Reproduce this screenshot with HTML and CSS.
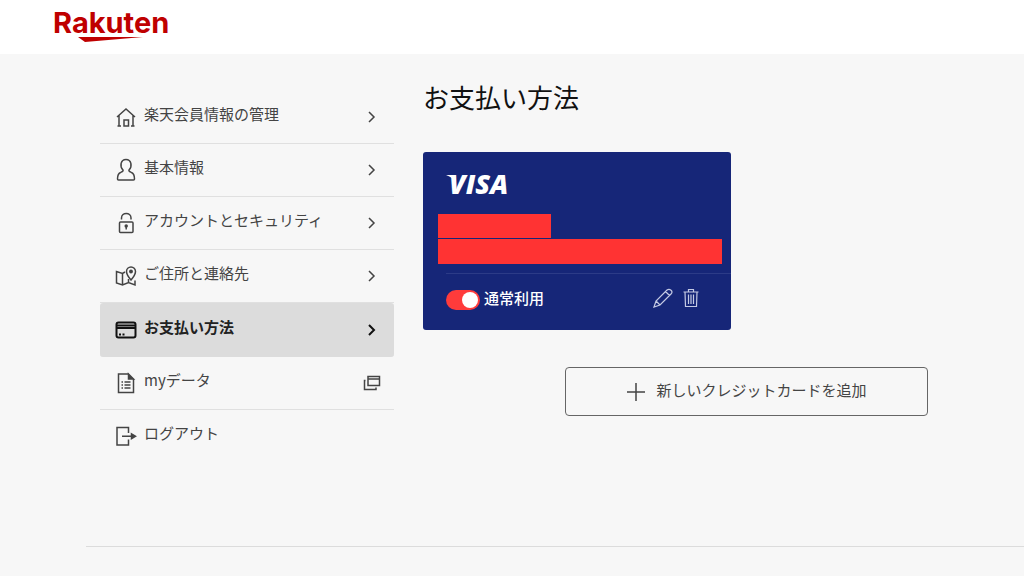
FILE: index.html
```
<!DOCTYPE html>
<html lang="ja">
    <head>
        <meta charset="utf-8">
        <title>お支払い方法</title>
        <link rel="stylesheet" href="styles.css">
    </head>
    <body>
        <header class="Header">
            <a class="Logo" href="#">
                <svg width="120" height="46" viewBox="0 0 120 46">
                    <text class="LogoText" x="-1" y="33">Rakuten</text>
                    <path d="M24 37H89L31 42Z" fill="#bf0000"/>
                </svg>
            </a>
        </header>

        <main class="Main">
            <nav class="Menu">
                <a class="MenuItem" href="#">
                    <svg class="Icon" viewBox="0 0 22 24">
                        <path d="M2 12L11 4L20 12M4 10.500V21M18 10.500V21M2.500 21H6M16 21H19.500M9 21V15H13.500V21Z"/>
                    </svg>
                    <span class="MenuText">楽天会員情報の管理</span>
                    <svg class="Arrow" viewBox="0 0 10 14"><path d="M2 2L7 7L2 12"/></svg>
                </a>
                <a class="MenuItem" href="#">
                    <svg class="Icon" viewBox="0 0 22 24">
                        <path d="M8 12C4.500 8.500 5.500 1.500 11 1.500S17.500 8.500 14 12C13.500 13.500 15 13.800 16.500 14.500C19 15.600 19.500 18 19.500 21Q19.500 22 18.500 22H3.500Q2.500 22 2.500 21C2.500 18 3 15.600 5.500 14.500C7 13.800 8.500 13.500 8 12Z"/>
                    </svg>
                    <span class="MenuText">基本情報</span>
                    <svg class="Arrow" viewBox="0 0 10 14"><path d="M2 2L7 7L2 12"/></svg>
                </a>
                <a class="MenuItem" href="#">
                    <svg class="Icon" viewBox="0 0 22 24">
                        <rect x="4.500" y="11" width="13.500" height="10.500" rx="1"/>
                        <path d="M6.500 8.500V7C6.500 1 16 1 16 7V8.500"/>
                        <path d="M11.200 15V18.500"/>
                        <circle cx="11.200" cy="15" r="1" fill="currentColor"/>
                    </svg>
                    <span class="MenuText">アカウントとセキュリティ</span>
                    <svg class="Arrow" viewBox="0 0 10 14"><path d="M2 2L7 7L2 12"/></svg>
                </a>
                <a class="MenuItem" href="#">
                    <svg class="Icon" viewBox="0 0 22 24">
                        <path d="M10 8L7.500 9.500L1.500 7.500V19L7.500 21L13.500 18.500L20 21V16.500M7.500 9.500V21M13.500 15V18.500"/>
                        <path d="M16 16C13 12.500 11.500 10.500 11.500 7.500A4.500 4.500 0 0 1 20.500 7.500C20.500 10.500 19 12.500 16 16Z"/>
                        <circle cx="16" cy="7.500" r="1.200" fill="currentColor"/>
                    </svg>
                    <span class="MenuText">ご住所と連絡先</span>
                    <svg class="Arrow" viewBox="0 0 10 14"><path d="M2 2L7 7L2 12"/></svg>
                </a>
                <a class="MenuItem Active" href="#">
                    <svg class="Icon" viewBox="0 0 22 24">
                        <rect x="1.500" y="4.500" width="19" height="15" rx="2"/>
                        <path d="M1.500 7.500H20.500M1.500 10H20.500"/>
                        <path d="M4 16.500H6M7.500 16.500H9.500"/>
                    </svg>
                    <span class="MenuText">お支払い方法</span>
                    <svg class="Arrow" viewBox="0 0 10 14"><path d="M2 2L7 7L2 12"/></svg>
                </a>
                <a class="MenuItem" href="#">
                    <svg class="Icon" viewBox="0 0 22 24">
                        <path d="M13.500 3H3.500V21.500H18.500V8"/>
                        <path d="M13.500 3L18.500 8H13.500Z" fill="currentColor"/>
                        <path d="M6.500 11H8M9.500 11H15.500M6.500 14H8M9.500 14H15.500M6.500 17H8M9.500 17H15.500"/>
                    </svg>
                    <span class="MenuText">myデータ</span>
                    <svg class="NewWindow" viewBox="0 0 18 16">
                        <path d="M5 1.500H16.500V10.500H5ZM5 4H16.500M2.500 5.500H1.500V14.500H13V12.500"/>
                    </svg>
                </a>
                <a class="MenuItem Last" href="#">
                    <svg class="Icon" viewBox="0 0 22 24">
                        <path d="M13.500 9V3.500H2V21H13.500V15.500M7 12.200H18"/>
                        <path d="M16.500 9.800L20.500 12.200L16.500 14.600Z" fill="currentColor"/>
                    </svg>
                    <span class="MenuText">ログアウト</span>
                </a>
            </nav>

            <section class="Content">
                <h1>お支払い方法</h1>
                <div class="Card">
                    <svg class="Visa" width="80" height="36" viewBox="0 0 80 36">
                        <text class="VisaText" x="3" y="28">VISA</text>
                        <path d="M0 9H9L10 16Q6 11 0 9Z" fill="#fff"/>
                    </svg>
                    <div class="Mask Short"></div>
                    <div class="Mask"></div>
                    <div class="CardFooter">
                        <input class="Toggle" type="checkbox" id="normal" checked>
                        <label class="ToggleLabel" for="normal">通常利用</label>
                        <button class="IconButton" type="button" aria-label="編集">
                            <svg width="20" height="20" viewBox="0 0 20 20">
                                <path d="M1 19L3 13L14 2Q16 0.500 18 2.200T18 6L7 17ZM3 13L7 17M12.500 3.500L16.500 7.500"/>
                            </svg>
                        </button>
                        <button class="IconButton" type="button" aria-label="削除">
                            <svg width="16" height="20" viewBox="0 0 16 20">
                                <path d="M0.500 4H15.500M5.500 4V1.500H10.500V4M2 4L2.500 18.500H13.500L14 4M5.500 6.500V16M8 6.500V16M10.500 6.500V16"/>
                            </svg>
                        </button>
                    </div>
                </div>
                <button class="AddButton" type="button">
                    <svg width="20" height="20" viewBox="0 0 20 20"><path d="M10 1V19M1 10H19"/></svg>
                    <span class="AddText">新しいクレジットカードを追加</span>
                </button>
            </section>
        </main>

        <footer class="Footer"></footer>
    </body>
</html>
```
FILE: styles.css
```
* {
    box-sizing: border-box;
}
body {
    margin: 0;
    background-color: #f7f7f7;
    color: #444;
    font-family: "Noto Sans CJK JP", sans-serif;
    font-size: 15px;
    line-height: 24px;
}
svg {
    display: block;
    flex: none;
    fill: none;
    stroke: currentColor;
    stroke-width: 1.5;
}
button {
    background: none;
    border: none;
    padding: 0;
    color: inherit;
    font: inherit;
    cursor: pointer;
}
.Header {
    height: 54px;
    padding-left: 54px;
    background-color: #fff;
}
.Logo {
    display: inline-block;
}
.Logo svg,
.Visa {
    stroke: none;
}
.LogoText {
    font: bold 29px Inter, sans-serif;
    fill: #bf0000;
}
.Main {
    display: grid;
    grid-template-columns: 294px 1fr;
    gap: 29px;
    padding: 23px 96px 0 100px;
}
/* Side menu */
.Menu {
    padding-top: 14px;
}
.MenuItem {
    display: flex;
    align-items: center;
    padding: 14px 17px 14px 15px;
    border-bottom: 1px solid #e0e0e0;
    color: #444;
    text-decoration: none;
}
.Icon {
    width: 22px;
    height: 24px;
    margin-right: 7px;
}
.MenuText {
    flex: 1;
    margin: -3px 0 3px;
}
.Arrow {
    width: 10px;
    height: 14px;
}
.NewWindow {
    width: 18px;
    height: 16px;
    margin-right: -4px;
}
.Active {
    padding-top: 15px;
    border-color: #dcdcdc;
    border-radius: 3px;
    background-color: #dcdcdc;
    color: #222;
    font-weight: bold;
}
.Active svg {
    stroke: #111;
    stroke-width: 2;
}
.Last {
    border: none;
}
/* Payment methods */
h1 {
    margin: 0 0 35px;
    color: #111;
    font-size: 26px;
    font-weight: normal;
    line-height: 40px;
}
.Card {
    width: 308px;
    padding: 14px 0 20px 15px;
    border-radius: 3px;
    background-color: #162678;
    color: #fff;
}
.Visa {
    margin: 0 0 12px 8px;
}
.VisaText {
    font: italic 800 27px "Open Sans", sans-serif;
    fill: #fff;
}
.Mask {
    height: 25px;
    margin-right: 9px;
    background-color: #ff3333;
}
.Short {
    width: 113px;
    height: 24px;
    margin-bottom: 1px;
}
.CardFooter {
    display: flex;
    align-items: center;
    margin: 9px 0 0 8px;
    padding: 12px 32px 0 0;
    border-top: 1px solid #2c3b87;
}
.Toggle {
    appearance: none;
    width: 34px;
    height: 20px;
    margin: 4px 4px 0 0;
    padding: 2px;
    border-radius: 10px;
    background-color: #777;
}
.Toggle::before {
    content: "";
    display: block;
    width: 16px;
    height: 16px;
    border-radius: 50%;
    background-color: #fff;
}
.Toggle:checked {
    background-color: #ff3b3b;
}
.Toggle:checked::before {
    margin-left: auto;
}
.ToggleLabel {
    flex: 1;
    font-weight: 500;
}
.IconButton {
    margin-left: 10px;
    color: #c5cae4;
}
.IconButton svg {
    stroke-width: 1.2;
}
.AddButton {
    display: flex;
    align-items: center;
    justify-content: center;
    gap: 10px;
    width: 363px;
    height: 49px;
    margin: 37px 0 0 auto;
    border: 1px solid #666;
    border-radius: 4px;
}
.AddText {
    margin-bottom: 3px;
}
.Footer {
    margin: 84px 0 0 86px;
    border-top: 1px solid #dcdcdc;
}
```
